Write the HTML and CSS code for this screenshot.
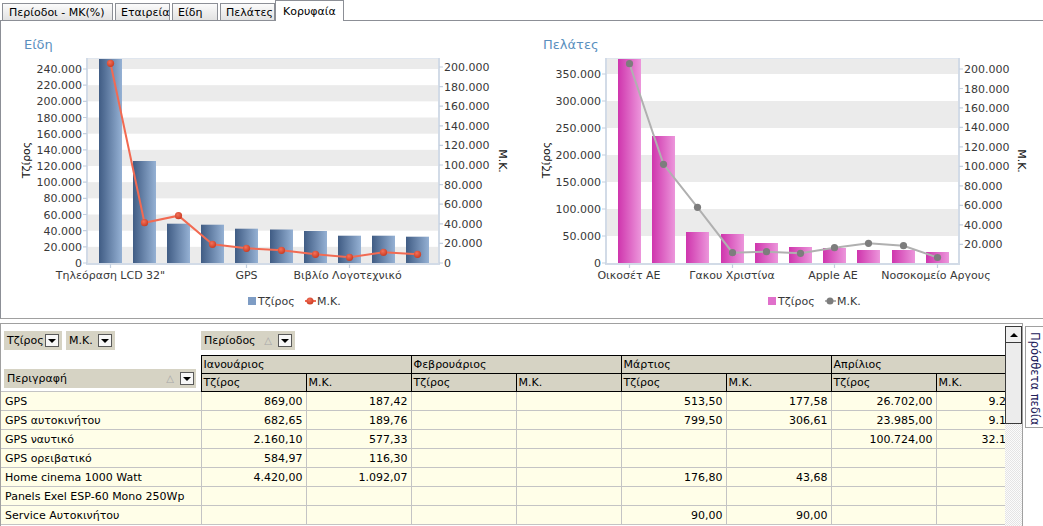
FILE: index.html
```html
<!DOCTYPE html>
<html lang="el">
<head>
<meta charset="utf-8">
<title>Κορυφαία</title>
<link rel="stylesheet" href="styles.css">
</head>
<body>
<div class="tabs">
  <div class="tab t1">Περίοδοι - ΜΚ(%)</div>
  <div class="tab t2">Εταιρεία</div>
  <div class="tab t3">Είδη</div>
  <div class="tab t4">Πελάτες</div>
  <div class="tab t5 active">Κορυφαία</div>
</div>
<div class="panel">
  <svg class="chart c1" viewBox="1 21 519 297" width="519" height="297">
    <defs>
      <linearGradient id="gBlue" x1="0" y1="0" x2="1" y2="0"><stop offset="0" stop-color="#405c84"/><stop offset="1" stop-color="#95b1d4"/></linearGradient>
      <radialGradient id="dRed" cx="0.4" cy="0.35" r="0.7"><stop offset="0" stop-color="#f2705a"/><stop offset="1" stop-color="#c9391f"/></radialGradient>
    </defs>
    <text class="ttl" x="24" y="49">Είδη</text>
    <g class="bands">
      <rect x="87" y="59" width="352" height="10"/>
      <rect x="87" y="85.17" width="352" height="16.17"/>
      <rect x="87" y="117.5" width="352" height="16.17"/>
      <rect x="87" y="149.83" width="352" height="16.17"/>
      <rect x="87" y="182.17" width="352" height="16.17"/>
      <rect x="87" y="214.5" width="352" height="16.17"/>
      <rect x="87" y="246.83" width="352" height="16.17"/>
    </g>
    <rect class="frame" x="87.5" y="58.5" width="351" height="205"/>
    <g fill="url(#gBlue)">
      <rect x="99" y="59" width="23" height="204"/>
      <rect x="133" y="161" width="23" height="102"/>
      <rect x="167" y="223.7" width="23" height="39.3"/>
      <rect x="201" y="224.7" width="23" height="38.3"/>
      <rect x="235" y="228.7" width="23" height="34.3"/>
      <rect x="270" y="229.5" width="23" height="33.5"/>
      <rect x="304" y="231" width="23" height="32"/>
      <rect x="338" y="235.7" width="23" height="27.3"/>
      <rect x="372" y="235.7" width="23" height="27.3"/>
      <rect x="406" y="236.7" width="23" height="26.3"/>
    </g>
    <polyline class="ln-red" points="110.5,63.3 144.5,222.7 178.5,215.7 212.5,244.3 246.5,248.3 281.5,250.3 315.5,254.3 349.5,257.3 383.5,252.3 417.5,254.3"/>
    <g class="dot-red">
      <circle cx="110.5" cy="63.3" r="3.6"/>
      <circle cx="144.5" cy="222.7" r="3.6"/>
      <circle cx="178.5" cy="215.7" r="3.6"/>
      <circle cx="212.5" cy="244.3" r="3.6"/>
      <circle cx="246.5" cy="248.3" r="3.6"/>
      <circle cx="281.5" cy="250.3" r="3.6"/>
      <circle cx="315.5" cy="254.3" r="3.6"/>
      <circle cx="349.5" cy="257.3" r="3.6"/>
      <circle cx="383.5" cy="252.3" r="3.6"/>
      <circle cx="417.5" cy="254.3" r="3.6"/>
    </g>
    <path class="axis" d="M87 58V264H439V58"/>
    <path class="tick" d="M83 69H87M83 85.17H87M83 101.33H87M83 117.5H87M83 133.67H87M83 149.83H87M83 166H87M83 182.17H87M83 198.33H87M83 214.5H87M83 230.67H87M83 246.83H87M83 263H87M439 67H443M439 86.6H443M439 106.2H443M439 125.8H443M439 145.4H443M439 165H443M439 184.6H443M439 204.2H443M439 223.8H443M439 243.4H443M439 263H443M110.5 264V268M246.5 264V268M349.5 264V268"/>
    <g class="lbl end">
      <text x="82" y="73">240.000</text>
      <text x="82" y="89.17">220.000</text>
      <text x="82" y="105.33">200.000</text>
      <text x="82" y="121.5">180.000</text>
      <text x="82" y="137.67">160.000</text>
      <text x="82" y="153.83">140.000</text>
      <text x="82" y="170">120.000</text>
      <text x="82" y="186.17">100.000</text>
      <text x="82" y="202.33">80.000</text>
      <text x="82" y="218.5">60.000</text>
      <text x="82" y="234.67">40.000</text>
      <text x="82" y="250.83">20.000</text>
      <text x="82" y="267">0</text>
    </g>
    <g class="lbl">
      <text x="444" y="71">200.000</text>
      <text x="444" y="90.6">180.000</text>
      <text x="444" y="110.2">160.000</text>
      <text x="444" y="129.8">140.000</text>
      <text x="444" y="149.4">120.000</text>
      <text x="444" y="169">100.000</text>
      <text x="444" y="188.6">80.000</text>
      <text x="444" y="208.2">60.000</text>
      <text x="444" y="227.8">40.000</text>
      <text x="444" y="247.4">20.000</text>
      <text x="444" y="267">0</text>
    </g>
    <g class="lbl mid">
      <text x="110.5" y="279">Τηλεόραση LCD 32"</text>
      <text x="246.5" y="279">GPS</text>
      <text x="347.5" y="279">Βιβλίο Λογοτεχνικό</text>
    </g>
    <text class="lbl mid ytitle" transform="translate(30 160) rotate(-90)">Τζίρος</text>
    <text class="lbl mid ytitle" transform="translate(499 161) rotate(90)">Μ.Κ.</text>
    <rect x="248" y="297" width="8" height="8" fill="#7e9cc4"/>
    <text class="lbl" x="258" y="305">Τζίρος</text>
    <line x1="305" y1="301" x2="316" y2="301" class="ln-red"/>
    <circle cx="310" cy="301" r="3.5" class="dot-red"/>
    <text class="lbl" x="317" y="305">Μ.Κ.</text>
  </svg>

  <svg class="chart c2" viewBox="520 21 523 297" width="523" height="297">
    <defs>
      <linearGradient id="gMag" x1="0" y1="0" x2="1" y2="0"><stop offset="0" stop-color="#cf35ad"/><stop offset="1" stop-color="#ec96db"/></linearGradient>
    </defs>
    <text class="ttl" x="543" y="49">Πελάτες</text>
    <g class="bands">
      <rect x="606" y="59" width="353" height="15"/>
      <rect x="606" y="101" width="353" height="27"/>
      <rect x="606" y="155" width="353" height="27"/>
      <rect x="606" y="209" width="353" height="27"/>
    </g>
    <rect class="frame" x="606.5" y="58.5" width="352" height="205"/>
    <g fill="url(#gMag)">
      <rect x="618" y="59" width="23" height="204"/>
      <rect x="652" y="136" width="23" height="127"/>
      <rect x="686" y="232" width="23" height="31"/>
      <rect x="721" y="234" width="23" height="29"/>
      <rect x="755" y="243" width="23" height="20"/>
      <rect x="789" y="247" width="23" height="16"/>
      <rect x="823" y="248" width="23" height="15"/>
      <rect x="857" y="250" width="23" height="13"/>
      <rect x="892" y="250" width="23" height="13"/>
      <rect x="926" y="252" width="23" height="11"/>
    </g>
    <polyline class="ln-gray" points="629.5,63.7 663.5,164.3 697.5,207.3 732.5,252.7 766.5,251.7 800.5,253.3 834.5,247.7 868.5,243.3 903.5,245.7 937.5,257.5"/>
    <g class="dot-gray">
      <circle cx="629.5" cy="63.7" r="3.6"/>
      <circle cx="663.5" cy="164.3" r="3.6"/>
      <circle cx="697.5" cy="207.3" r="3.6"/>
      <circle cx="732.5" cy="252.7" r="3.6"/>
      <circle cx="766.5" cy="251.7" r="3.6"/>
      <circle cx="800.5" cy="253.3" r="3.6"/>
      <circle cx="834.5" cy="247.7" r="3.6"/>
      <circle cx="868.5" cy="243.3" r="3.6"/>
      <circle cx="903.5" cy="245.7" r="3.6"/>
      <circle cx="937.5" cy="257.5" r="3.6"/>
    </g>
    <path class="axis" d="M606 58V264H959V58"/>
    <path class="tick" d="M602 263H606M602 236H606M602 209H606M602 182H606M602 155H606M602 128H606M602 101H606M602 74H606M959 244.3H963M959 224.8H963M959 205.3H963M959 185.9H963M959 166.4H963M959 146.9H963M959 127.4H963M959 107.9H963M959 88.5H963M959 69H963M629.5 264V268M732.5 264V268M834.5 264V268M937.5 264V268"/>
    <g class="lbl end">
      <text x="601" y="78">350.000</text>
      <text x="601" y="105">300.000</text>
      <text x="601" y="132">250.000</text>
      <text x="601" y="159">200.000</text>
      <text x="601" y="186">150.000</text>
      <text x="601" y="213">100.000</text>
      <text x="601" y="240">50.000</text>
      <text x="601" y="267">0</text>
    </g>
    <g class="lbl">
      <text x="964" y="73">200.000</text>
      <text x="964" y="92.5">180.000</text>
      <text x="964" y="111.9">160.000</text>
      <text x="964" y="131.4">140.000</text>
      <text x="964" y="150.9">120.000</text>
      <text x="964" y="170.4">100.000</text>
      <text x="964" y="189.9">80.000</text>
      <text x="964" y="209.3">60.000</text>
      <text x="964" y="228.8">40.000</text>
      <text x="964" y="248.3">20.000</text>
    </g>
    <g class="lbl mid">
      <text x="629" y="279">Οικοσέτ ΑΕ</text>
      <text x="732" y="279">Γακου Χριστίνα</text>
      <text x="833" y="279">Apple AE</text>
      <text x="936" y="279">Νοσοκομείο Αργους</text>
    </g>
    <text class="lbl mid ytitle" transform="translate(550 160) rotate(-90)">Τζίρος</text>
    <text class="lbl mid ytitle" transform="translate(1018 161) rotate(90)">Μ.Κ.</text>
    <rect x="768" y="297" width="8" height="8" fill="#e070cb"/>
    <text class="lbl" x="778" y="305">Τζίρος</text>
    <line x1="825" y1="301" x2="836" y2="301" class="ln-gray"/>
    <circle cx="830" cy="301" r="3.5" class="dot-gray"/>
    <text class="lbl" x="837" y="305">Μ.Κ.</text>
  </svg>
</div>

<div class="bottom">
  <div class="pv-frame">
    <div class="pv-main">
      <div class="pv-fields">
        <div class="data-fields">
          <div class="fbtn w-tz"><span>Τζίρος</span><span class="dd"></span></div>
          <div class="fbtn w-mk"><span>Μ.Κ.</span><span class="dd"></span></div>
        </div>
        <div class="fbtn w-per"><span>Περίοδος</span><span class="sort">△</span><span class="dd"></span></div>
      </div>
      <table class="pv-table">
        <colgroup>
          <col class="c-desc"><col class="c-val"><col class="c-val"><col class="c-val"><col class="c-val"><col class="c-val"><col class="c-val"><col class="c-val"><col class="c-val">
        </colgroup>
        <thead>
          <tr class="h1">
            <td class="rowhdr" rowspan="2"><div class="fbtn w-desc"><span>Περιγραφή</span><span class="sort">△</span><span class="dd"></span></div></td>
            <th colspan="2">Ιανουάριος</th>
            <th colspan="2">Φεβρουάριος</th>
            <th colspan="2">Μάρτιος</th>
            <th colspan="2">Απρίλιος</th>
          </tr>
          <tr class="h2">
            <th>Τζίρος</th><th>Μ.Κ.</th>
            <th>Τζίρος</th><th>Μ.Κ.</th>
            <th>Τζίρος</th><th>Μ.Κ.</th>
            <th>Τζίρος</th><th>Μ.Κ.</th>
          </tr>
        </thead>
        <tbody>
          <tr><td class="desc">GPS</td><td>869,00</td><td>187,42</td><td></td><td></td><td>513,50</td><td>177,58</td><td>26.702,00</td><td>9.244,25</td></tr>
          <tr><td class="desc">GPS αυτοκινήτου</td><td>682,65</td><td>189,76</td><td></td><td></td><td>799,50</td><td>306,61</td><td>23.985,00</td><td>9.187,60</td></tr>
          <tr><td class="desc">GPS ναυτικό</td><td>2.160,10</td><td>577,33</td><td></td><td></td><td></td><td></td><td>100.724,00</td><td>32.198,10</td></tr>
          <tr><td class="desc">GPS ορειβατικό</td><td>584,97</td><td>116,30</td><td></td><td></td><td></td><td></td><td></td><td></td></tr>
          <tr><td class="desc">Home cinema 1000 Watt</td><td>4.420,00</td><td>1.092,07</td><td></td><td></td><td>176,80</td><td>43,68</td><td></td><td></td></tr>
          <tr><td class="desc">Panels Exel ESP-60 Mono 250Wp</td><td></td><td></td><td></td><td></td><td></td><td></td><td></td><td></td></tr>
          <tr><td class="desc">Service Αυτοκινήτου</td><td></td><td></td><td></td><td></td><td>90,00</td><td>90,00</td><td></td><td></td></tr>
        </tbody>
      </table>
    </div>
    <div class="vscroll">
      <div class="sb-up"></div>
      <div class="sb-thumb"></div>
      <div class="sb-track"></div>
    </div>
  </div>
  <div class="side"><span>Πρόσθετα πεδία</span></div>
</div>
</body>
</html>
```

FILE: styles.css
```css
html, body {
  margin: 0;
  padding: 0;
}
body {
  width: 1043px;
  height: 526px;
  overflow: hidden;
  background: #fff;
  font-family: "DejaVu Sans", sans-serif;
  font-size: 11px;
  color: #000;
}

/* ---------- tabs ---------- */
.tabs {
  display: flex;
  align-items: flex-end;
  height: 20px;
  padding-left: 2px;
  border-bottom: 1px solid #8c8f96;
  position: relative;
  z-index: 1;
}
.tab {
  box-sizing: border-box;
  height: 17px;
  margin-right: 2px;
  padding: 2px 0 0 5px;
  border: 1px solid #8c8f96;
  border-bottom: none;
  background: linear-gradient(#fbfbfb, #e2e2e2);
  font-size: 11px;
  line-height: 13px;
  white-space: nowrap;
}
.t1 { width: 111px; padding-left: 6px; }
.t2 { width: 55px; }
.t3 { width: 46px; }
.t4 { width: 55px; margin-right: 0; }
.t5 { width: 69px; }
.tab.active {
  height: 21px;
  margin-bottom: -1px;
  padding-top: 4px;
  padding-left: 7px;
  background: #fff;
}

/* ---------- chart panel ---------- */
.panel {
  display: flex;
  height: 297px;
  border-left: 1px solid #8c8f96;
  border-bottom: 1px solid #a0a0a0;
}
.chart {
  display: block;
  font-family: "DejaVu Sans", sans-serif;
}
.c1 { width: 519px; height: 297px; }
.c2 { width: 523px; height: 297px; }
.ttl { font-size: 13px; fill: #5a8fbe; }
.bands rect { fill: #ebebeb; }
.frame { fill: none; stroke: #e0e6ee; stroke-width: 1; }
.axis { fill: none; stroke: #d2dbe7; stroke-width: 2; }
.tick { fill: none; stroke: #c3cfdf; stroke-width: 1.2; }
.lbl { font-size: 11px; fill: #383838; }
.end { text-anchor: end; }
.mid { text-anchor: middle; }
.ytitle { fill: #111; }
.ln-red { fill: none; stroke: #f26a52; stroke-width: 2; }
.ln-gray { fill: none; stroke: #b0b0b0; stroke-width: 2; }
.dot-red { fill: url(#dRed); }
.dot-gray { fill: #7d7d7d; }

/* ---------- pivot ---------- */
.bottom {
  display: flex;
  height: 207px;
}
.pv-frame {
  box-sizing: border-box;
  display: flex;
  width: 1023px;
  height: 203px;
  margin-top: 4px;
  border: 1px solid #a0a0a0;
  border-bottom: none;
}
.pv-main {
  width: 1004px;
  overflow: hidden;
  background: #fff;
}
.pv-fields {
  display: flex;
  align-items: flex-start;
  height: 31px;
  box-sizing: border-box;
  padding-top: 7px;
}
.data-fields {
  display: flex;
  gap: 4px;
  width: 200px;
  box-sizing: border-box;
  padding-left: 3px;
}
.fbtn {
  display: flex;
  align-items: center;
  box-sizing: border-box;
  height: 19px;
  padding: 0 3px 0 3px;
  background: #d6d3c4;
  white-space: nowrap;
}
.w-tz { width: 58px; }
.w-mk { width: 49px; }
.w-per { width: 94px; }
.w-desc { width: 192px; padding-right: 2px; }
.dd {
  box-sizing: border-box;
  width: 14px;
  height: 13px;
  margin-left: auto;
  border: 1px solid #5a5a5a;
  background: #f7f7f7;
  display: flex;
  align-items: center;
  justify-content: center;
}
.dd::before {
  content: "";
  border-left: 4px solid transparent;
  border-right: 4px solid transparent;
  border-top: 4px solid #000;
  margin-top: 1px;
}
.sort {
  margin-left: auto;
  margin-right: 6px;
  color: #a8a8a8;
  font-size: 10px;
}
.sort + .dd { margin-left: 0; }

.pv-table {
  border-collapse: collapse;
  table-layout: fixed;
  width: 1040px;
}
.c-desc { width: 200px; }
.c-val { width: 105px; }
.pv-table th {
  background: #d6d3c4;
  border: 1px solid #000;
  font-weight: normal;
  text-align: left;
  padding: 0 0 0 2px;
  white-space: nowrap;
  overflow: hidden;
}
.h1 th { height: 17px; }
.h2 th { height: 17px; }
.rowhdr {
  vertical-align: bottom;
  padding: 0 0 3px 3px;
}
.pv-table tbody td {
  height: 18px;
  padding: 0 3px;
  border: 1px solid #c4c4c4;
  background: #fffee8;
  text-align: right;
  white-space: nowrap;
  overflow: hidden;
}
.pv-table tbody td.desc {
  text-align: left;
  padding-left: 4px;
  border-left: none;
}

/* scrollbar */
.vscroll {
  display: flex;
  flex-direction: column;
  width: 17px;
  margin-top: 2px;
}
.sb-up {
  box-sizing: border-box;
  height: 17px;
  border: 1px solid #3a3a3a;
  background: #f0f0f0;
  display: flex;
  align-items: center;
  justify-content: center;
}
.sb-up::before {
  content: "";
  border-left: 4px solid transparent;
  border-right: 4px solid transparent;
  border-bottom: 4px solid #000;
}
.sb-thumb {
  box-sizing: border-box;
  height: 81px;
  border: 1px solid #3a3a3a;
  border-top: none;
  background: #ececec;
}
.sb-track {
  flex: 1;
  background: repeating-conic-gradient(#e4e4e4 0 25%, #fbfbfb 0 50%) 0 0 / 2px 2px;
}

/* side tab */
.side {
  box-sizing: border-box;
  width: 18px;
  height: 102px;
  margin: 7px 0 0 2px;
  border: 1px solid #a0a0a0;
  border-right: none;
  background: #fff;
  writing-mode: vertical-rl;
  padding-top: 5px;
  color: #22205a;
  font-size: 11.5px;
  line-height: 16px;
  white-space: nowrap;
}
```
